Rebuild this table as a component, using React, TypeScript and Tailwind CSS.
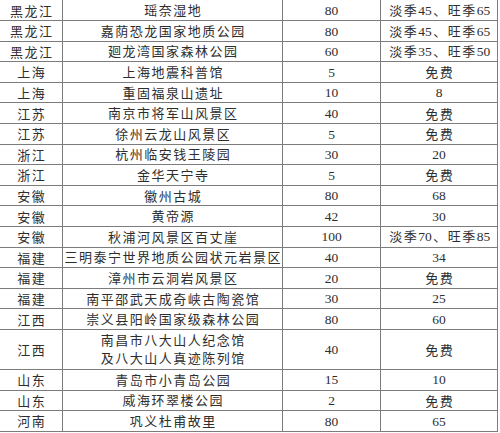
import React from "react";

type Row = { p: string; n: string[]; price: string; d: string; h: string };

const rows: Row[] = [
  { p: "黑龙江", n: ["瑶奈湿地"], price: "80", d: "淡季45、旺季65", h: "h-[21px]" },
  { p: "黑龙江", n: ["嘉荫恐龙国家地质公园"], price: "80", d: "淡季45、旺季65", h: "h-[20.6px]" },
  { p: "黑龙江", n: ["廻龙湾国家森林公园"], price: "60", d: "淡季35、旺季50", h: "h-[20.6px]" },
  { p: "上海", n: ["上海地震科普馆"], price: "5", d: "免费", h: "h-[20.6px]" },
  { p: "上海", n: ["重固福泉山遗址"], price: "10", d: "8", h: "h-[20.6px]" },
  { p: "江苏", n: ["南京市将军山风景区"], price: "40", d: "免费", h: "h-[20.6px]" },
  { p: "江苏", n: ["徐州云龙山风景区"], price: "5", d: "免费", h: "h-[20.6px]" },
  { p: "浙江", n: ["杭州临安钱王陵园"], price: "30", d: "20", h: "h-[20.6px]" },
  { p: "浙江", n: ["金华天宁寺"], price: "5", d: "免费", h: "h-[20.6px]" },
  { p: "安徽", n: ["徽州古城"], price: "80", d: "68", h: "h-[20.6px]" },
  { p: "安徽", n: ["黄帝源"], price: "42", d: "30", h: "h-[20.6px]" },
  { p: "安徽", n: ["秋浦河风景区百丈崖"], price: "100", d: "淡季70、旺季85", h: "h-[20.6px]" },
  { p: "福建", n: ["三明泰宁世界地质公园状元岩景区"], price: "40", d: "34", h: "h-[20.6px]" },
  { p: "福建", n: ["漳州市云洞岩风景区"], price: "20", d: "免费", h: "h-[20.6px]" },
  { p: "福建", n: ["南平邵武天成奇峡古陶瓷馆"], price: "30", d: "25", h: "h-[20.6px]" },
  { p: "江西", n: ["崇义县阳岭国家级森林公园"], price: "80", d: "60", h: "h-[20.6px]" },
  { p: "江西", n: ["南昌市八大山人纪念馆", "及八大山人真迹陈列馆"], price: "40", d: "免费", h: "h-[40px]" },
  { p: "山东", n: ["青岛市小青岛公园"], price: "15", d: "10", h: "h-[20.6px]" },
  { p: "山东", n: ["威海环翠楼公园"], price: "2", d: "免费", h: "h-[20.6px]" },
  { p: "河南", n: ["巩义杜甫故里"], price: "80", d: "65", h: "h-[20.6px]" },
];

function Txt({ s }: { s: string }) {
  const parts = s.split(/([0-9]+)/).filter((x) => x !== "");
  return (
    <span className="whitespace-nowrap">
      {parts.map((part, i) =>
        /^[0-9]+$/.test(part) ? (
          <span
            key={i}
            className="font-['Liberation_Serif',serif] text-[13.5px] tracking-normal"
          >
            {part}
          </span>
        ) : (
          <span key={i} className="tracking-[1.5px] pl-[1.5px]">
            {part}
          </span>
        )
      )}
    </span>
  );
}

export default function App() {
  return (
    <div className="w-[500px] h-[433px] bg-white overflow-hidden text-[#2e2e2e] text-[13px] font-['Noto_Sans_CJK_SC',sans-serif]">
      <div className="flex flex-col w-[498px]">
        {rows.map((r, i) => (
          <div key={i} className={`flex border-b border-[#7c7c7c] ${r.h}`}>
            <div className="w-[63px] border-r border-[#7c7c7c] flex items-center justify-center leading-none">
              <Txt s={r.p} />
            </div>
            <div className="w-[220px] border-r border-[#7c7c7c] flex flex-col items-center justify-center leading-[18px]">
              {r.n.map((l, j) => (
                <Txt key={j} s={l} />
              ))}
            </div>
            <div className="w-[98px] border-r border-[#7c7c7c] flex items-center justify-center leading-none">
              <Txt s={r.price} />
            </div>
            <div className="w-[117px] border-r border-[#7c7c7c] flex items-center justify-center leading-none">
              <Txt s={r.d} />
            </div>
          </div>
        ))}
      </div>
    </div>
  );
}
